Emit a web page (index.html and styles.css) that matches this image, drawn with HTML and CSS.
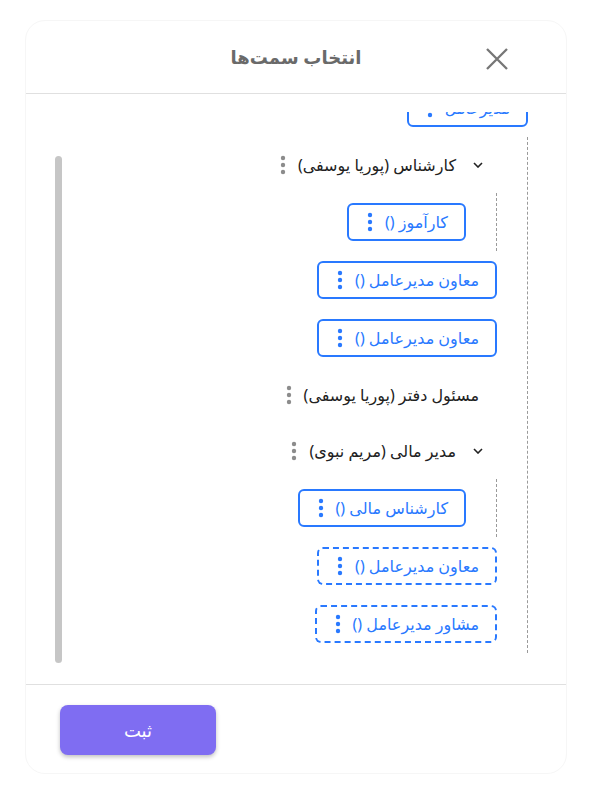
FILE: index.html
```html
<!DOCTYPE html>
<html lang="fa" dir="rtl">
<head>
<meta charset="utf-8">
<title>انتخاب سمت‌ها</title>
<link rel="stylesheet" href="styles.css">
</head>
<body>
<div class="dialog">
  <header class="dialog-head">
    <button class="close" type="button" aria-label="بستن">
      <svg viewBox="0 0 22 22" width="22" height="22"><path d="M1 1 L21 21 M21 1 L1 21"/></svg>
    </button>
    <h2 class="title">انتخاب سمت‌ها</h2>
  </header>

  <div class="dialog-body">
    <div class="tree-viewport" id="treeViewport">
      <ul class="tree">
        <li class="node">
          <div class="row">
            <div class="chip"><span>مدیرعامل</span><svg class="kebab" viewBox="0 0 6 20"><circle cx="3" cy="3" r="2.2"/><circle cx="3" cy="10" r="2.2"/><circle cx="3" cy="17" r="2.2"/></svg></div>
          </div>
          <ul class="children">
            <li class="node">
              <div class="row">
                <div class="label has-toggle">
                  <svg class="toggle" viewBox="0 0 10 6"><path d="M1 1 L5 5 L9 1"/></svg>
                  <span>کارشناس (پوریا یوسفی)</span>
                  <svg class="kebab" viewBox="0 0 6 20"><circle cx="3" cy="3" r="2.2"/><circle cx="3" cy="10" r="2.2"/><circle cx="3" cy="17" r="2.2"/></svg>
                </div>
              </div>
              <ul class="children">
                <li class="node">
                  <div class="row">
                    <div class="chip"><span>کارآموز ()</span><svg class="kebab" viewBox="0 0 6 20"><circle cx="3" cy="3" r="2.2"/><circle cx="3" cy="10" r="2.2"/><circle cx="3" cy="17" r="2.2"/></svg></div>
                  </div>
                </li>
              </ul>
            </li>
            <li class="node">
              <div class="row">
                <div class="chip"><span>معاون مدیرعامل ()</span><svg class="kebab" viewBox="0 0 6 20"><circle cx="3" cy="3" r="2.2"/><circle cx="3" cy="10" r="2.2"/><circle cx="3" cy="17" r="2.2"/></svg></div>
              </div>
            </li>
            <li class="node">
              <div class="row">
                <div class="chip"><span>معاون مدیرعامل ()</span><svg class="kebab" viewBox="0 0 6 20"><circle cx="3" cy="3" r="2.2"/><circle cx="3" cy="10" r="2.2"/><circle cx="3" cy="17" r="2.2"/></svg></div>
              </div>
            </li>
            <li class="node">
              <div class="row">
                <div class="label">
                  <span>مسئول دفتر (پوریا یوسفی)</span>
                  <svg class="kebab" viewBox="0 0 6 20"><circle cx="3" cy="3" r="2.2"/><circle cx="3" cy="10" r="2.2"/><circle cx="3" cy="17" r="2.2"/></svg>
                </div>
              </div>
            </li>
            <li class="node">
              <div class="row">
                <div class="label has-toggle">
                  <svg class="toggle" viewBox="0 0 10 6"><path d="M1 1 L5 5 L9 1"/></svg>
                  <span>مدیر مالی (مریم نبوی)</span>
                  <svg class="kebab" viewBox="0 0 6 20"><circle cx="3" cy="3" r="2.2"/><circle cx="3" cy="10" r="2.2"/><circle cx="3" cy="17" r="2.2"/></svg>
                </div>
              </div>
              <ul class="children">
                <li class="node">
                  <div class="row">
                    <div class="chip"><span>کارشناس مالی ()</span><svg class="kebab" viewBox="0 0 6 20"><circle cx="3" cy="3" r="2.2"/><circle cx="3" cy="10" r="2.2"/><circle cx="3" cy="17" r="2.2"/></svg></div>
                  </div>
                </li>
              </ul>
            </li>
            <li class="node">
              <div class="row">
                <div class="chip chip-draft"><span>معاون مدیرعامل ()</span><svg class="kebab" viewBox="0 0 6 20"><circle cx="3" cy="3" r="2.2"/><circle cx="3" cy="10" r="2.2"/><circle cx="3" cy="17" r="2.2"/></svg></div>
              </div>
            </li>
            <li class="node">
              <div class="row">
                <div class="chip chip-draft"><span>مشاور مدیرعامل ()</span><svg class="kebab" viewBox="0 0 6 20"><circle cx="3" cy="3" r="2.2"/><circle cx="3" cy="10" r="2.2"/><circle cx="3" cy="17" r="2.2"/></svg></div>
              </div>
            </li>
          </ul>
        </li>
      </ul>
    </div>
    <div class="scroll-thumb"></div>
  </div>

  <footer class="dialog-foot">
    <button class="submit" type="button">ثبت</button>
  </footer>
</div>
<script>
  // keep the list scrolled a little past the root item
  document.getElementById('treeViewport').scrollTop = 33;
</script>
</body>
</html>
```

FILE: styles.css
```css
* {
  box-sizing: border-box;
}

html,
body {
  margin: 0;
  background: #fff;
}

body {
  font-family: "Noto Sans", "DejaVu Sans", sans-serif;
  color: #212121;
}

/* dialog card */
.dialog {
  margin: 20px 25px 0;
  height: 754px;
  border: 1px solid #f6f6f6;
  border-radius: 20px;
  background: #fff;
  display: flex;
  flex-direction: column;
}

.dialog-head {
  height: 73px;
  flex: none;
  border-bottom: 1px solid #e0e0e0;
  display: grid;
  grid-template-columns: 1fr auto 1fr;
  align-items: center;
}

.close {
  justify-self: start;
  width: 22px;
  height: 22px;
  margin-right: 58px;
  margin-top: 4px;
  padding: 0;
  border: 0;
  background: none;
  cursor: pointer;
}

.close svg {
  display: block;
  stroke: #767676;
  stroke-width: 2.3;
  fill: none;
}

.title {
  margin: 0;
  font-size: 18px;
  font-weight: 700;
  color: #6a6a6a;
}

/* scrolling tree area */
.dialog-body {
  flex: 1;
  min-height: 0;
  display: flex;
  padding: 18px 38px 12px 29px;
}

.tree-viewport {
  flex: 1;
  height: 100%;
  overflow: hidden;
}

.scroll-thumb {
  flex: none;
  width: 7px;
  height: 507px;
  margin-top: 44px;
  border-radius: 4px;
  background: #c6c6c6;
}

.tree,
.children {
  list-style: none;
  margin: 0;
  padding: 0;
}

.tree {
  padding-bottom: 40px;
}

.children {
  border-right: 1px dashed #9a9a9a;
  padding-right: 30px;
}

.row {
  display: flex;
  padding: 10px 0;
}

.chip {
  height: 38px;
  display: flex;
  align-items: center;
  gap: 12px;
  padding: 0 16px 0 18px;
  border: 2px solid #2979ff;
  border-radius: 6px;
  color: #2979ff;
  font-size: 16px;
  white-space: nowrap;
}

.chip-draft {
  border-style: dashed;
}

.label {
  height: 36px;
  display: flex;
  align-items: center;
  gap: 12px;
  padding: 0 18px;
  font-size: 16px;
  color: #212121;
  white-space: nowrap;
}

.label.has-toggle {
  padding-right: 14px;
}

.toggle {
  width: 10px;
  height: 6px;
  margin-left: 5px;
  fill: none;
  stroke: #222;
  stroke-width: 1.6;
}

.kebab {
  flex: none;
  width: 6px;
  height: 20px;
  fill: #2979ff;
}

.label .kebab {
  fill: #8c8c8c;
}

/* footer */
.dialog-foot {
  flex: none;
  border-top: 1px solid #e0e0e0;
  padding: 20px 34px 18px;
  display: flex;
  justify-content: flex-end;
}

.submit {
  width: 156px;
  height: 50px;
  border: 0;
  border-radius: 8px;
  background: #7f6df2;
  color: #fff;
  font-family: inherit;
  font-size: 18px;
  font-weight: 500;
  box-shadow: 0 2px 4px rgba(0, 0, 0, 0.25);
  cursor: pointer;
}
```
